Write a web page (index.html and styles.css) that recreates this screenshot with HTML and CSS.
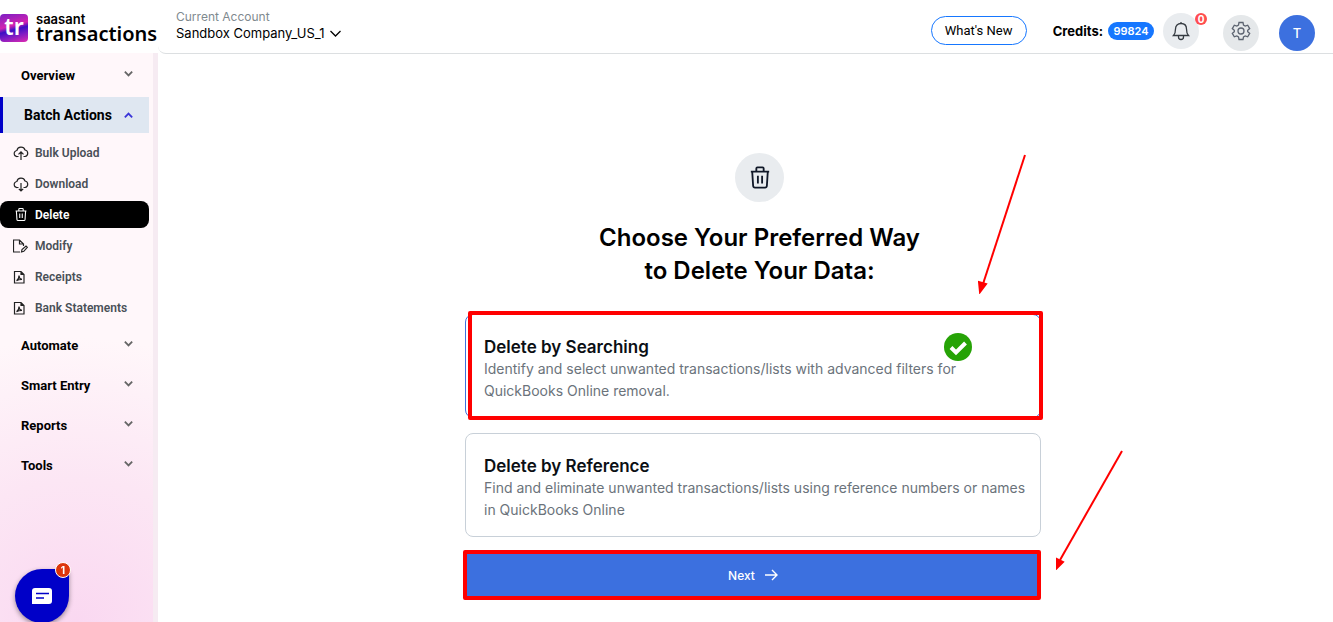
FILE: index.html
```html
<!DOCTYPE html>
<html lang="en">
<head>
    <meta charset="utf-8">
    <meta name="viewport" content="width=device-width, initial-scale=1">
    <title>SaasAnt Transactions - Delete</title>
    <link rel="stylesheet" href="styles.css">
</head>
<body>
    <!-- Shared icons -->
    <svg class="sprite" aria-hidden="true">
        <symbol id="i-chevron" viewBox="0 0 12 12"><path d="M2 4l4 4 4-4"/></symbol>
        <symbol id="i-upload" viewBox="0 0 16 16"><path d="M5.500 11.500H4.500a3 3 0 0 1-.6-6A4.200 4.200 0 0 1 12 5a3.300 3.300 0 0 1 0 6.500h-1.500M8 15V7M5.500 9.300L8 6.800l2.500 2.500"/></symbol>
        <symbol id="i-download" viewBox="0 0 16 16"><path d="M5.500 11.500H4.500a3 3 0 0 1-.6-6A4.200 4.200 0 0 1 12 5a3.300 3.300 0 0 1 0 6.500h-1.500M8 7v8M5.800 12.800L8 15l2.200-2.200"/></symbol>
        <symbol id="i-trash" viewBox="0 0 24 24"><path d="M2 5.500h20M8 5.500V2.200Q8 1 9.200 1h5.600Q16 1 16 2.200v3.300M3.500 5.500l1 15.500q.2 2 2 2h11q1.800 0 2-2l1-15.500M9.700 10v8.500M14.300 10v8.500"/></symbol>
        <symbol id="i-modify" viewBox="0 0 16 16"><path d="M7 14H.5v-12h6l4 4v2M6.500 2v4h4M8.500 14l.5-2.500 4-3.500 1.300 1.300-3.500 4z"/></symbol>
        <symbol id="i-pdf" viewBox="0 0 16 16"><path d="M1.500 2.500h6.500l3 3v8.500H1.500zM8 2.500v3h3M3.500 11.800c1.500-.8 2.500-3 2.500-5.300 0 2.300 1 3.500 3 3.800-2 0-4 .4-5.500 1.500z"/></symbol>
    </svg>

    <div class="layout">
        <aside class="sidebar">
            <a class="logo" href="#">
                <span class="logo-mark">tr</span>
                <span class="logo-text">
                    <span class="logo-brand">saasant</span>
                    <span class="logo-product">transactions</span>
                </span>
            </a>
            <nav class="nav">
                <button class="nav-group">Overview <svg><use href="#i-chevron"/></svg></button>
                <button class="nav-group open" aria-expanded="true">Batch Actions <svg><use href="#i-chevron"/></svg></button>
                <ul class="nav-list">
                    <li><a href="#"><svg><use href="#i-upload"/></svg>Bulk Upload</a></li>
                    <li><a href="#"><svg><use href="#i-download"/></svg>Download</a></li>
                    <li><a href="#" class="active"><svg class="thin"><use href="#i-trash"/></svg>Delete</a></li>
                    <li><a href="#"><svg><use href="#i-modify"/></svg>Modify</a></li>
                    <li><a href="#"><svg><use href="#i-pdf"/></svg>Receipts</a></li>
                    <li><a href="#"><svg><use href="#i-pdf"/></svg>Bank Statements</a></li>
                </ul>
                <button class="nav-group">Automate <svg><use href="#i-chevron"/></svg></button>
                <button class="nav-group">Smart Entry <svg><use href="#i-chevron"/></svg></button>
                <button class="nav-group">Reports <svg><use href="#i-chevron"/></svg></button>
                <button class="nav-group">Tools <svg><use href="#i-chevron"/></svg></button>
            </nav>
        </aside>

        <div class="page">
            <header class="topbar">
                <div class="account">
                    <span class="account-label">Current Account</span>
                    <button class="account-name">Sandbox Company_US_1 <svg><use href="#i-chevron"/></svg></button>
                </div>
                <button class="whats-new">What's New</button>
                <div class="credits">Credits: <span class="credits-count">99824</span></div>
                <button class="round bell" aria-label="Notifications">
                    <svg viewBox="0 0 20 20"><path d="M2.500 14.500c1.500-1.500 2-3 2-6.500 0-3.500 2.200-5.500 5.500-5.500s5.500 2 5.500 5.500c0 3.500.5 5 2 6.500zM10 2.500V1M7.500 14.500v1.500a2.500 2.500 0 0 0 5 0v-1.500"/></svg>
                    <span class="bell-count">0</span>
                </button>
                <button class="round gear" aria-label="Settings">
                    <svg viewBox="0 0 20 20"><path d="M8 1.500h4l.5 2.600 1.700 1 2.500-.9 2 3.400-2 1.700v1.400l2 1.700-2 3.400-2.500-.9-1.700 1-.5 2.600H8l-.5-2.600-1.700-1-2.500.9-2-3.400 2-1.700V9.300l-2-1.700 2-3.400 2.500.9 1.700-1z"/><circle cx="10" cy="10" r="3"/></svg>
                </button>
                <button class="round avatar">T</button>
            </header>

            <main class="main">
                <form class="chooser">
                    <div class="intro">
                        <span class="intro-icon"><svg><use href="#i-trash"/></svg></span>
                        <h1>Choose Your Preferred Way<br>to Delete Your Data:</h1>
                    </div>

                    <label class="option">
                        <input type="radio" name="method" value="search" checked>
                        <span class="option-text">
                            <strong>Delete by Searching</strong>
                            <span>Identify and select unwanted transactions/lists with advanced filters for<br>QuickBooks Online removal.</span>
                        </span>
                        <svg class="check" viewBox="0 0 28 28"><circle cx="14" cy="14" r="14"/><path d="M7 14.500l5 5 9.500-9.500"/></svg>
                        <span class="mark mark-option"></span>
                        <svg class="arrow arrow-option" viewBox="0 0 48 140"><path d="M47 1L5 130"/><path class="tip" d="M2 138l-1-10 7 2z"/></svg>
                    </label>

                    <label class="option">
                        <input type="radio" name="method" value="reference">
                        <span class="option-text">
                            <strong>Delete by Reference</strong>
                            <span>Find and eliminate unwanted transactions/lists using reference numbers or names<br>in QuickBooks Online</span>
                        </span>
                    </label>

                    <div class="submit">
                        <button type="button" class="next">Next
                            <svg viewBox="0 0 14 12"><path d="M1 6h12M8 1l5 5-5 5"/></svg>
                        </button>
                        <span class="mark mark-next"></span>
                        <svg class="arrow arrow-next" viewBox="0 0 68 120"><path d="M67 1L5 110"/><path class="tip" d="M2 118v-9l6 3z"/></svg>
                    </div>
                </form>
            </main>
        </div>
    </div>

    <button class="chat" aria-label="Open chat">
        <svg viewBox="0 0 20 16"><path d="M3 0h14q3 0 3 3v10q0 3-3 3H0V3q0-3 3-3z"/><path class="lines" d="M4 5.500h13M4 10h8"/></svg>
        <span class="chat-count">1</span>
    </button>
</body>
</html>
```
FILE: styles.css
```css
* {
    box-sizing: border-box;
}

body {
    margin: 0;
    font-family: Inter, "Liberation Sans", sans-serif;
    font-size: 13px;
    color: #000;
    background: #fff;
}

button {
    font: inherit;
    color: inherit;
    background: none;
    border: none;
    padding: 0;
    cursor: pointer;
}

a {
    color: inherit;
    text-decoration: none;
}

svg {
    fill: none;
    stroke: currentColor;
    flex: none;
}

.sprite {
    position: absolute;
    width: 0;
    height: 0;
}

.layout {
    display: grid;
    grid-template-columns: 158px 1fr;
    min-height: 100vh;
}

/* Sidebar */
.sidebar {
    display: flex;
    flex-direction: column;
}

.logo {
    display: flex;
    align-items: center;
    gap: 8px;
    height: 53px;
    padding-top: 2px;
}

.logo-mark {
    width: 28px;
    height: 28px;
    border-radius: 4px;
    background: linear-gradient(165deg, #7a1fc4 0%, #d322b0 42%, #3d10c4 55%, #7a1cc4 72%, #e02bb0 100%);
    color: #fff;
    font: 600 23px/25px "Noto Sans", sans-serif;
    text-align: center;
}

.logo-text {
    display: flex;
    flex-direction: column;
}

.logo-brand {
    font: 600 13px/12px Inter, sans-serif;
}

.logo-product {
    font: 600 20px/18px "Noto Sans", sans-serif;
}

.nav {
    flex: 1;
    padding: 4px 4px 0 0;
    border-right: 5px solid #f6ebf2;
    background: radial-gradient(ellipse 200% 50% at 50% 100%, #fad8f1 0%, #fce6f4 50%, #fff7fa 100%);
    font-family: Roboto, sans-serif;
}

.nav-group {
    display: flex;
    align-items: center;
    justify-content: space-between;
    width: 100%;
    height: 36px;
    margin-bottom: 4px;
    padding: 0 15px 0 21px;
    font-weight: 700;
}

.nav-group svg {
    width: 11px;
    height: 11px;
    margin-bottom: 3px;
    stroke: #666;
    stroke-width: 2;
}

.nav-group.open {
    background: #dfe7f1;
    border-left: 3px solid #0000c8;
    font-size: 14px;
}

.nav-group.open svg {
    margin-bottom: 0;
    stroke: #3a35d8;
    transform: rotate(180deg);
}

.nav-list {
    list-style: none;
    margin: 0;
    padding: 2px 0 6px;
    display: grid;
    gap: 4px;
}

.nav-list a {
    display: flex;
    align-items: center;
    gap: 6px;
    height: 27px;
    padding-left: 13px;
    border-radius: 8px;
    font-size: 12px;
    font-weight: 600;
    color: #495057;
}

.nav-list svg {
    width: 16px;
    height: 16px;
    stroke: #222;
    stroke-width: 1.2;
}

.nav-list .thin {
    height: 13px;
    stroke-width: 2;
    stroke: #fff;
}

.nav-list .active {
    background: #000;
    color: #fff;
}

/* Top bar */
.page {
    display: flex;
    flex-direction: column;
}

.topbar {
    display: flex;
    align-items: center;
    height: 54px;
    padding: 0 18px;
    border-bottom: 1px solid #dcdfe1;
    border-bottom-left-radius: 8px;
}

.account {
    margin: 0 auto 3px 0;
    line-height: 17px;
}

.account-label {
    display: block;
    font-size: 12px;
    color: #7f8a8f;
}

.account-name {
    display: flex;
    align-items: center;
    gap: 3px;
}

.account-name svg {
    width: 15px;
    height: 15px;
}

.whats-new {
    width: 96px;
    height: 29px;
    margin: 8px 26px 0 0;
    border: 1px solid #1677ff;
    border-radius: 15px;
    font-family: Roboto, sans-serif;
}

.credits {
    display: flex;
    align-items: center;
    gap: 5px;
    margin: 8px 9px 0 0;
    font-weight: 700;
}

.credits-count {
    width: 46px;
    border-radius: 9px;
    background: #1677ff;
    color: #fff;
    font-size: 11px;
    font-weight: 600;
    line-height: 18px;
    text-align: center;
}

.round {
    position: relative;
    display: flex;
    align-items: center;
    justify-content: center;
    width: 36px;
    height: 36px;
    border-radius: 50%;
    background: #e9ecef;
    color: #343a40;
}

.round svg {
    width: 20px;
    height: 20px;
    stroke-width: 1.3;
}

.bell {
    margin: 8px 24px 0 0;
}

.bell-count {
    position: absolute;
    top: 0;
    right: -8px;
    width: 12px;
    height: 12px;
    border-radius: 50%;
    background: #ff4d4f;
    color: #fff;
    font-size: 10px;
    font-weight: 700;
    line-height: 12px;
}

.gear {
    margin: 12px 20px 0 0;
    background: #e5e8ea;
    color: #5c6370;
}

.gear svg {
    margin-bottom: 3px;
}

.avatar {
    margin-top: 12px;
    background: #3c70df;
    color: #fff;
    font-weight: 500;
}

/* Delete method chooser */
.main {
    padding: 99px 0 22px 15px;
}

.chooser {
    width: 576px;
    max-width: 100%;
    margin: 0 auto;
}

.intro {
    padding-left: 13px;
    text-align: center;
}

.intro-icon {
    display: inline-flex;
    align-items: center;
    justify-content: center;
    width: 49px;
    height: 49px;
    border-radius: 50%;
    background: #e9ecef;
}

.intro-icon svg {
    width: 22px;
    height: 23px;
    stroke: #101828;
    stroke-width: 2;
}

h1 {
    margin: 19px 0 27px;
    font-size: 24px;
    line-height: 33px;
    font-weight: 600;
}

.option {
    position: relative;
    display: flex;
    height: 104px;
    margin-bottom: 15px;
    padding: 21px 12px 21px 18px;
    border: 1px solid #c8d0d8;
    border-radius: 8px;
    cursor: pointer;
}

.option:has(input:checked) {
    border-color: #3c70df;
}

.option input {
    position: absolute;
    opacity: 0;
}

.option-text {
    color: #6b737b;
    font-size: 14px;
    line-height: 22px;
}

.option-text strong {
    display: block;
    font-size: 17px;
    font-weight: 600;
    color: #0b0f14;
}

.check {
    position: absolute;
    top: 18px;
    right: 68px;
    width: 28px;
    height: 28px;
}

.check circle {
    fill: #26a306;
    stroke: none;
}

.check path {
    stroke: #fff;
    stroke-width: 4;
}

.submit {
    position: relative;
}

.next {
    display: flex;
    align-items: center;
    justify-content: center;
    gap: 9px;
    width: 100%;
    height: 46px;
    border-radius: 6px;
    background: #3c70df;
    color: #fff;
    font-size: 12px;
    font-weight: 500;
}

.next svg {
    width: 14px;
    height: 12px;
    stroke-width: 1.4;
}

/* Red callouts */
.mark {
    position: absolute;
    border: 4px solid #f00;
    border-radius: 2px;
}

.mark-option {
    inset: -4px -3px -3px 2px;
}

.mark-next {
    inset: -2px 0 -2px -2px;
}

.arrow {
    position: absolute;
    stroke: #f00;
    stroke-width: 2;
}

.arrow .tip {
    fill: #f00;
}

.arrow-option {
    right: 14px;
    bottom: 123px;
    width: 48px;
    height: 140px;
}

.arrow-next {
    right: -82px;
    bottom: 28px;
    width: 68px;
    height: 120px;
}

/* Chat launcher */
.chat {
    position: fixed;
    left: 15px;
    bottom: -1px;
    display: flex;
    align-items: center;
    justify-content: center;
    width: 54px;
    height: 54px;
    border-radius: 50% 4px 50% 50%;
    background: #0000c8;
    box-shadow: 0 2px 5px rgba(0, 0, 0, 0.4);
}

.chat svg {
    width: 20px;
    height: 16px;
    fill: #fff;
    stroke: none;
}

.chat .lines {
    stroke: #0000c8;
    stroke-width: 1.6;
}

.chat-count {
    position: absolute;
    top: -7px;
    right: -2px;
    width: 16px;
    height: 16px;
    border: 1px solid #fff;
    border-radius: 50%;
    background: #dd350c;
    color: #fff;
    font-size: 10px;
    font-weight: 700;
    line-height: 14px;
}
```
